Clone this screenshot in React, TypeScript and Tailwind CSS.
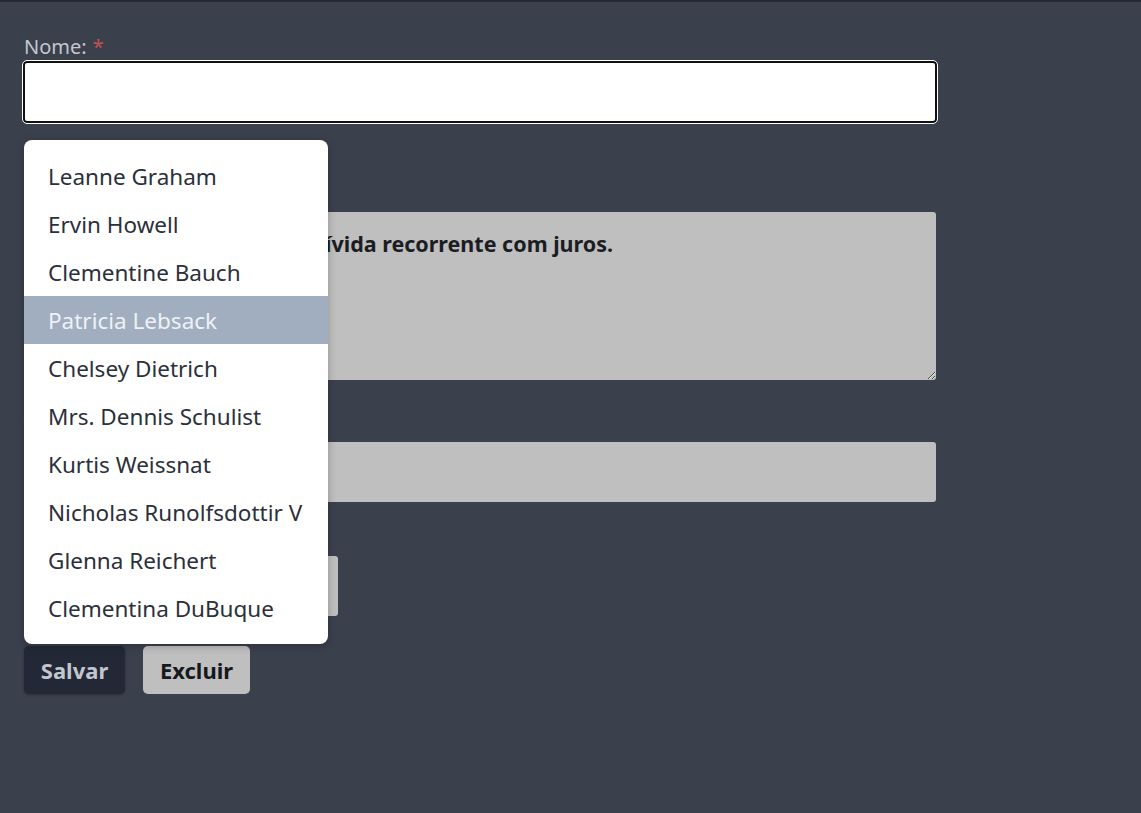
const users = [
  "Leanne Graham",
  "Ervin Howell",
  "Clementine Bauch",
  "Patricia Lebsack",
  "Chelsey Dietrich",
  "Mrs. Dennis Schulist",
  "Kurtis Weissnat",
  "Nicholas Runolfsdottir V",
  "Glenna Reichert",
  "Clementina DuBuque",
]

function Label({ children, required }: { children: React.ReactNode; required?: boolean }) {
  return (
    <label className="block h-[25px] text-[20px] leading-[25px] text-[#c3c7cf]">
      {children}
      {required && <span className="ml-1.5 text-[#c9504f]">*</span>}
    </label>
  )
}

function UserMenu() {
  return (
    <ul className="absolute left-6 top-[138px] z-10 w-[304px] rounded-lg bg-white py-3 shadow-[0_2px_8px_rgba(0,0,0,0.25)]">
      {users.map((u, i) => (
        <li
          key={u}
          className={
            i === 3
              ? "h-12 bg-[#a0aec0] px-6 pt-[2px] text-[22.5px] leading-[46px] text-[#eef1f5]"
              : "h-12 px-6 pt-[2px] text-[22.5px] leading-[46px] text-[#2b303b]"
          }
        >
          {u}
        </li>
      ))}
    </ul>
  )
}

export default function App() {
  return (
    <div
      className="min-h-[813px] border-t-2 border-[#232834] bg-[#3b404d]"
      style={{ fontFamily: '"Noto Sans", "Open Sans", sans-serif' }}
    >
      <div className="relative w-[914px] pl-6 pt-[32px] box-content">
        <div>
          <Label required>Nome:</Label>
          <input
            type="text"
            className="mt-[2px] block h-[62px] w-[914px] -ml-px rounded-[4px] border-2 border-[#111] bg-white px-3 text-[20px] outline outline-1 outline-white"
          />
        </div>

        <div className="mt-[64px]">
          <Label>Descrição:</Label>
          <textarea
            readOnly
            defaultValue="Empréstimo pessoal fixo: Dívida recorrente com juros."
            className="block h-[168px] w-[912px] rounded-[3px] bg-[#bfbfbf] px-3 py-[18px] text-[21.5px] font-bold leading-[28px] text-[#1b1d22] outline-none"
          />
        </div>

        <div className="mt-[37px]">
          <Label>Valor:</Label>
          <input
            type="text"
            readOnly
            className="block h-[60px] w-[912px] rounded-[3px] bg-[#bfbfbf] px-3 text-[20px] outline-none"
          />
        </div>

        <div className="mt-[29px]">
          <Label>Data:</Label>
          <div className="h-[60px] w-[314px] rounded-[3px] bg-[#bfbfbf]" />
        </div>

        <div className="mt-[30px] flex gap-[18px]">
          <button className="h-12 w-[101px] rounded-[5px] bg-[#232836] text-[22px] font-bold text-[#c2c6ce] shadow-[0_1px_3px_rgba(0,0,0,0.3)]">
            Salvar
          </button>
          <button className="h-12 w-[107px] rounded-[5px] bg-[#bfbfbf] text-[22px] font-bold text-[#16181c]">
            Excluir
          </button>
        </div>

        <UserMenu />
      </div>
    </div>
  )
}
